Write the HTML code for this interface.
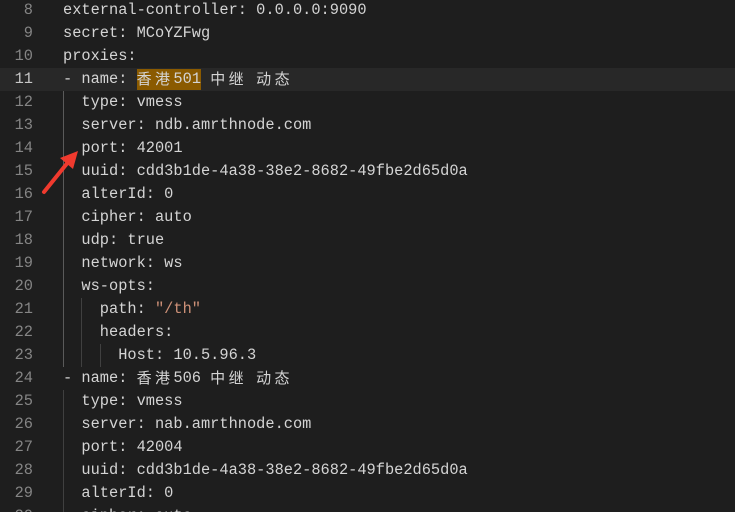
<!DOCTYPE html>
<html><head><meta charset="utf-8"><style>
html,body{margin:0;padding:0;background:#1e1e1e;width:735px;height:512px;overflow:hidden;}
.wrap{position:relative;width:735px;height:512px;font-family:"Liberation Mono","Noto Sans CJK SC",monospace;font-size:15.33px;color:#d4d4d4;}
.row{position:absolute;left:0;height:23px;line-height:23px;width:735px;white-space:pre;}
.ln{position:absolute;left:0;width:33px;text-align:right;color:#858585;}
.tx{position:absolute;left:63px;top:0;height:23px;}
.cur{background:#282828;}
.cur .ln{color:#c6c6c6;}
.c{display:inline-block;width:18.4px;height:23px;line-height:21px;vertical-align:top;text-align:left;font-family:"Noto Sans CJK SC",sans-serif;font-size:15px;}
.hl{background:#8a5a00;display:inline-block;height:21px;line-height:21px;vertical-align:top;margin-top:1px;}
.hl .c{height:21px;line-height:20px;}
.s{color:#ce9178;}
.g{position:absolute;width:1px;background:#404040;}
</style></head><body><div class="wrap">
<div class="row" style="top:-1px"><span class="ln">8</span><span class="tx">external-controller: 0.0.0.0:9090</span></div>
<div class="row" style="top:22px"><span class="ln">9</span><span class="tx">secret: MCoYZFwg</span></div>
<div class="row" style="top:45px"><span class="ln">10</span><span class="tx">proxies:</span></div>
<div class="row cur" style="top:68px;left:0"><span class="ln">11</span><span class="tx">- name: <span class="hl"><span class="c">香</span><span class="c">港</span>501</span> <span class="c">中</span><span class="c">继</span> <span class="c">动</span><span class="c">态</span></span></div>
<div class="row" style="top:91px"><span class="ln">12</span><span class="tx">  type: vmess</span></div>
<div class="row" style="top:114px"><span class="ln">13</span><span class="tx">  server: ndb.amrthnode.com</span></div>
<div class="row" style="top:137px"><span class="ln">14</span><span class="tx">  port: 42001</span></div>
<div class="row" style="top:160px"><span class="ln">15</span><span class="tx">  uuid: cdd3b1de-4a38-38e2-8682-49fbe2d65d0a</span></div>
<div class="row" style="top:183px"><span class="ln">16</span><span class="tx">  alterId: 0</span></div>
<div class="row" style="top:206px"><span class="ln">17</span><span class="tx">  cipher: auto</span></div>
<div class="row" style="top:229px"><span class="ln">18</span><span class="tx">  udp: true</span></div>
<div class="row" style="top:252px"><span class="ln">19</span><span class="tx">  network: ws</span></div>
<div class="row" style="top:275px"><span class="ln">20</span><span class="tx">  ws-opts:</span></div>
<div class="row" style="top:298px"><span class="ln">21</span><span class="tx">    path: <span class="s">"/th"</span></span></div>
<div class="row" style="top:321px"><span class="ln">22</span><span class="tx">    headers:</span></div>
<div class="row" style="top:344px"><span class="ln">23</span><span class="tx">      Host: 10.5.96.3</span></div>
<div class="row" style="top:367px"><span class="ln">24</span><span class="tx">- name: <span class="c">香</span><span class="c">港</span>506 <span class="c">中</span><span class="c">继</span> <span class="c">动</span><span class="c">态</span></span></div>
<div class="row" style="top:390px"><span class="ln">25</span><span class="tx">  type: vmess</span></div>
<div class="row" style="top:413px"><span class="ln">26</span><span class="tx">  server: nab.amrthnode.com</span></div>
<div class="row" style="top:436px"><span class="ln">27</span><span class="tx">  port: 42004</span></div>
<div class="row" style="top:459px"><span class="ln">28</span><span class="tx">  uuid: cdd3b1de-4a38-38e2-8682-49fbe2d65d0a</span></div>
<div class="row" style="top:482px"><span class="ln">29</span><span class="tx">  alterId: 0</span></div>
<div class="row" style="top:505px"><span class="ln">30</span><span class="tx">  cipher: auto</span></div>
<div class="g" style="left:63px;top:91px;height:276px;background:#5a5a5a"></div>
<div class="g" style="left:81px;top:298px;height:69px"></div>
<div class="g" style="left:100px;top:344px;height:23px"></div>
<div class="g" style="left:63px;top:390px;height:122px"></div>
<svg style="position:absolute;left:0;top:0" width="735" height="512"><path d="M44 192 L69 161" stroke="#f03a2e" stroke-width="4" stroke-linecap="round"/><path d="M78 151 L60 158 L73 169 Z" fill="#f03a2e"/></svg>
</div></body></html>
